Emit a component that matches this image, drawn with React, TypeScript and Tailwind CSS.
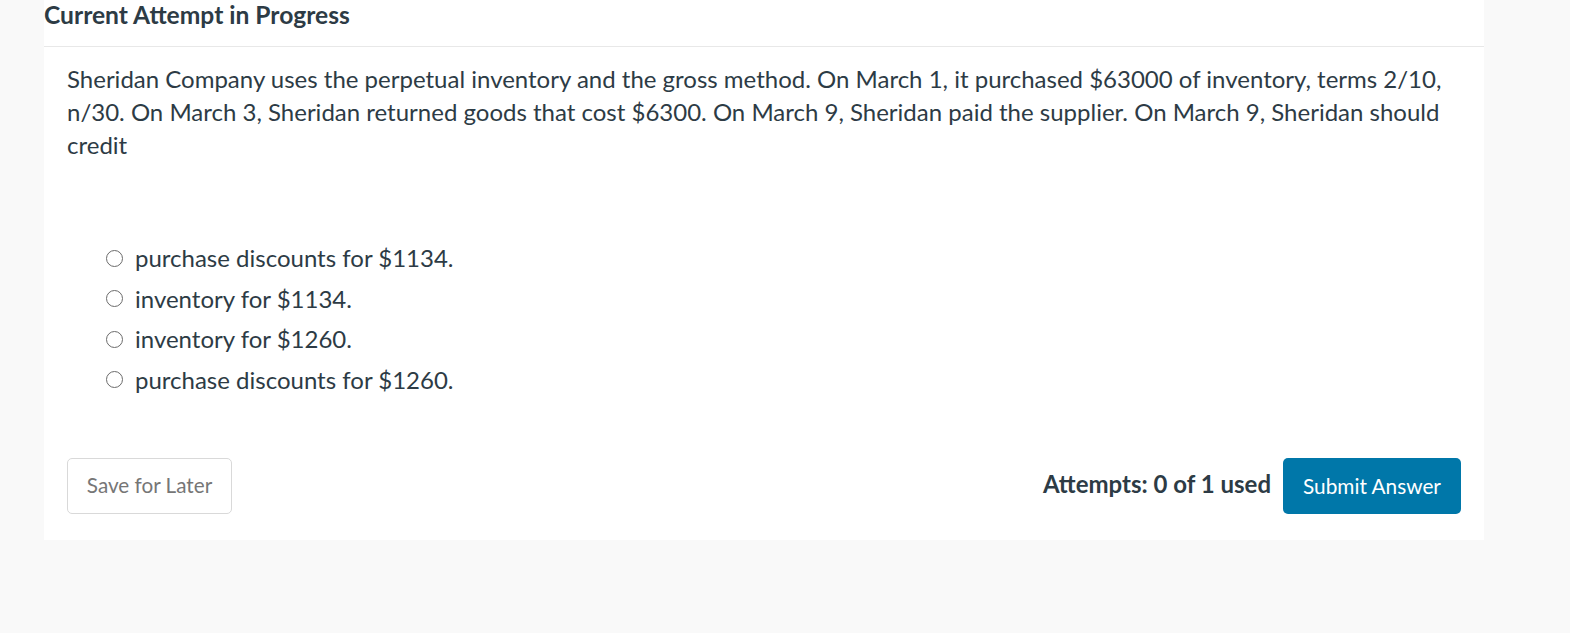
const options = [
  'purchase discounts for $1134.',
  'inventory for $1134.',
  'inventory for $1260.',
  'purchase discounts for $1260.',
]

function Radio() {
  return <span className="w-[17px] h-[17px] rounded-full border-[1.5px] border-[#6b6b6b] bg-white shrink-0" />
}

export default function App() {
  return (
    <div className="min-h-[633px] bg-[#f9f9f9] text-[#2d3b45]" style={{ fontFamily: 'Lato, "Open Sans", sans-serif' }}>
      <div className="ml-[44px] w-[1440px] bg-white">
        <div className="h-[47px] border-b border-[#e8e8e8]">
          <h2 className="text-[24.6px] font-bold leading-[30px]">Current Attempt in Progress</h2>
        </div>

        <div className="px-[23px] pb-[26px]">
          <p className="pt-[15px] text-[24px] leading-[33px]">
            Sheridan Company uses the perpetual inventory and the gross method. On March 1, it purchased $63000 of
            inventory, terms 2/10, n/30. On March 3, Sheridan returned goods that cost $6300. On March 9, Sheridan
            paid the supplier. On March 9, Sheridan should credit
          </p>

          <div className="mt-[77px] pl-[39px] flex flex-col">
            {options.map((o) => (
              <label key={o} className="h-[40.5px] flex items-center gap-[12px] text-[24px]">
                <Radio />
                <span>{o}</span>
              </label>
            ))}
          </div>

          <div className="mt-[58px] flex items-center justify-between">
            <button className="h-[56px] w-[165px] rounded-[5px] border border-[#d9d9d9] bg-white text-[20.7px] text-[#767676]">
              Save for Later
            </button>
            <div className="flex items-center gap-[12px]">
              <span className="text-[24px] font-bold -mt-[4px]">Attempts: 0 of 1 used</span>
              <button className="h-[56px] w-[178px] rounded-[5px] bg-[#0077a9] text-[20.8px] text-white">
                Submit Answer
              </button>
            </div>
          </div>
        </div>
      </div>
    </div>
  )
}
